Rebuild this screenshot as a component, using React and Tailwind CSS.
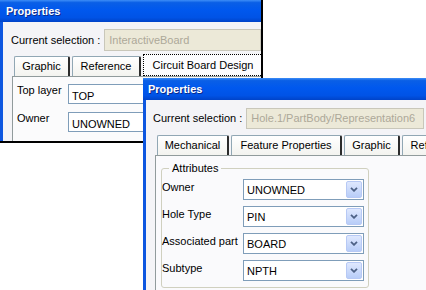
import React from "react";

const titleBg =
  "bg-[linear-gradient(180deg,#3d8df7_0%,#0a5fe6_12%,#0058ee_45%,#0053e6_80%,#0043c8_100%)]";

function Tab({ w, children, selected }) {
  if (selected) {
    return (
      <div
        className="h-[22px] shrink-0 whitespace-nowrap flex items-center justify-center bg-[#fcfcfe] border border-dotted border-black"
        style={{ width: w }}
      >
        {children}
      </div>
    );
  }
  return (
    <div
      className="h-[20px] shrink-0 whitespace-nowrap mr-[2px] flex items-center justify-center rounded-t-[2px] border-l border-t border-[#91a7b4] border-r-2 border-r-[#2b2b2b] bg-[linear-gradient(180deg,#ffffff,#f3f3ef)]"
      style={{ width: w }}
    >
      {children}
    </div>
  );
}

function Chevron() {
  return (
    <svg width="8" height="5" viewBox="0 0 8 5">
      <path d="M1 0.8 L4 3.8 L7 0.8" fill="none" stroke="#4d6185" strokeWidth="1.8" />
    </svg>
  );
}

function Combo({ value }) {
  return (
    <div className="w-[121px] h-[21px] border border-[#7f9db9] bg-white flex items-center">
      <span className="flex-1 pl-[3px] pt-[1px]">{value}</span>
      <div className="w-[16px] h-[17px] mr-[1px] rounded-[2px] border border-[#b7c9f5] bg-[linear-gradient(180deg,#dfe8fe,#b8cdf8)] flex items-center justify-center">
        <Chevron />
      </div>
    </div>
  );
}

export default function App() {
  return (
    <div
      className="relative w-[426px] h-[290px] overflow-hidden bg-white text-[11px] leading-[13px] text-black"
      style={{ fontFamily: '"Liberation Sans", Arial, sans-serif' }}
    >
      {/* Window 1 */}
      <div className="absolute left-0 top-0 w-[263px] h-[143px] flex flex-col border-r-2 border-b-2 border-black overflow-hidden">
        <div
          className={`h-[22px] shrink-0 flex items-center pl-[6px] text-white font-bold text-[11px] [text-shadow:1px_1px_0_#0b2a8a] ${titleBg}`}
        >
          Properties
        </div>
        <div className="flex-1 flex flex-col bg-[#f4f4f7] border-l-[3px] border-[#0d56e0]">
          <div className="flex items-center pl-[8px] pt-[7px]">
            <span className="whitespace-nowrap shrink-0">Current selection :</span>
            <div className="ml-[4px] flex-1 h-[22px] flex items-center pl-[4px] bg-[#ece9d8] border border-[#c9c7ba] text-[#aca899] whitespace-nowrap">
              InteractiveBoard
            </div>
          </div>
          <div className="flex items-end pl-[11px] mt-[3px]">
            <Tab w={56}>Graphic</Tab>
            <Tab w={69}>Reference</Tab>
            <Tab w={120} selected>
              Circuit Board Design
            </Tab>
          </div>
          <div className="flex-1 ml-[9px] border-l border-t border-[#919b9c] bg-[#fbfbfc] pt-[7px] flex flex-col gap-[8px]">
            <div className="flex items-start">
              <span className="w-[55px] pl-[4px] shrink-0 whitespace-nowrap">Top layer</span>
              <div className="flex-1 h-[20px] border border-[#7f9db9] bg-white flex items-center pl-[3px] pt-[5px]">
                TOP
              </div>
            </div>
            <div className="flex items-start">
              <span className="w-[55px] pl-[4px] shrink-0">Owner</span>
              <div className="flex-1 h-[20px] border border-[#7f9db9] bg-white flex items-center pl-[3px] pt-[5px]">
                UNOWNED
              </div>
            </div>
          </div>
        </div>
      </div>

      {/* Window 2 */}
      <div className="absolute left-[143px] top-[78px] w-[283px] h-[212px] flex flex-col overflow-hidden">
        <div
          className={`h-[22px] shrink-0 flex items-center pl-[5px] text-white font-bold text-[11px] [text-shadow:1px_1px_0_#0b2a8a] ${titleBg}`}
        >
          Properties
        </div>
        <div className="flex-1 flex flex-col bg-[#f4f4f7] border-l-[3px] border-[#0d56e0]">
          <div className="flex items-center pl-[7px] pt-[8px]">
            <span className="whitespace-nowrap shrink-0">Current selection :</span>
            <div className="ml-[4px] w-[178px] shrink-0 h-[21px] flex items-center pl-[4px] bg-[#ece9d8] border border-[#c9c7ba] text-[#aca899] whitespace-nowrap">
              Hole.1/PartBody/Representation6
            </div>
          </div>
          <div className="flex items-end pl-[11px] mt-[6px]">
            <Tab w={72}>Mechanical</Tab>
            <Tab w={111}>Feature Properties</Tab>
            <Tab w={56}>Graphic</Tab>
            <Tab w={69}>Reference</Tab>
          </div>
          <div className="flex-1 ml-[9px] border-l border-t border-[#919b9c] bg-[#fafafc] pl-[5px] pt-[6px]">
            <fieldset className="w-[207px] h-[126px] border border-[#d0d0bf] rounded-[3px] pr-[4px]">
              <legend className="ml-[7px] px-[3px]">Attributes</legend>
              <div className="flex flex-col gap-[6px] pt-[4px]">
                {[
                  ["Owner", "UNOWNED"],
                  ["Hole Type", "PIN"],
                  ["Associated part", "BOARD"],
                  ["Subtype", "NPTH"],
                ].map(([l, v]) => (
                  <div key={l} className="flex items-start">
                    <span className="w-[81px] shrink-0 pt-[2px] whitespace-nowrap">{l}</span>
                    <Combo value={v} />
                  </div>
                ))}
              </div>
            </fieldset>
          </div>
        </div>
      </div>
    </div>
  );
}
